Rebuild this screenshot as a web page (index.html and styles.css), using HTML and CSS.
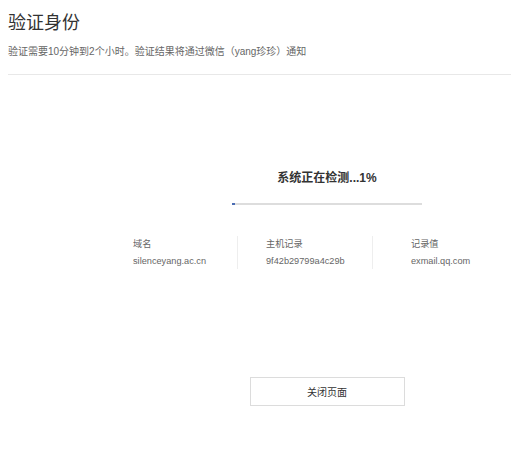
FILE: index.html
```html
<!DOCTYPE html>
<html>
<head>
<meta charset="utf-8">
<link rel="stylesheet" href="styles.css">
</head>
<body>
<div class="page">
  <div class="header">
    <h1 class="title">验证身份</h1>
    <p class="subtitle">验证需要10分钟到2个小时。验证结果将通过微信（yang珍珍）通知</p>
  </div>
  <div class="main">
    <div class="progress-area">
      <div class="status">系统正在检测...1%</div>
      <div class="bar"><div class="fill" style="width:1.5%"></div></div>
    </div>
    <div class="records">
      <div class="cell c1">
        <div class="label">域名</div>
        <div class="value">silenceyang.ac.cn</div>
      </div>
      <div class="cell c2">
        <div class="label">主机记录</div>
        <div class="value">9f42b29799a4c29b</div>
      </div>
      <div class="cell c3">
        <div class="label">记录值</div>
        <div class="value">exmail.qq.com</div>
      </div>
    </div>
    <div class="actions">
      <button class="btn">关闭页面</button>
    </div>
  </div>
</div>
</body>
</html>
```
FILE: styles.css
```css
html, body {
  margin: 0;
  padding: 0;
  background: #fff;
}
body {
  font-family: "Liberation Sans", "Noto Sans CJK SC", sans-serif;
  color: #333;
}
.page {
  width: 511px;
}
.header {
  margin-left: 8px;
  padding-top: 11px;
  padding-bottom: 15px;
  border-bottom: 1px solid #e8e8e8;
}
.title {
  margin: 0;
  font-size: 18px;
  line-height: 24px;
  font-weight: normal;
  color: #333;
}
.subtitle {
  margin: 10px 0 0 0;
  font-size: 10px;
  line-height: 14px;
  color: #666;
}
.main {
  padding-top: 94px;
}
.progress-area {
  display: flex;
  flex-direction: column;
  align-items: center;
  margin-left: 143px;
  width: 368px;
}
.status {
  font-size: 12px;
  line-height: 18px;
  font-weight: bold;
  color: #333;
}
.bar {
  margin-top: 16px;
  width: 190px;
  height: 2px;
  background: #ddd;
}
.fill {
  height: 100%;
  background: #4a6cb3;
}
.records {
  display: flex;
  margin-top: 31px;
  margin-left: 133px;
}
.cell {
  display: flex;
  flex-direction: column;
  gap: 3px;
  padding: 1px 0;
}
.c1 {
  width: 104px;
  border-right: 1px solid #eee;
}
.c2 {
  width: 106px;
  padding-left: 28px;
  border-right: 1px solid #eee;
}
.c3 {
  padding-left: 38px;
}
.label, .value {
  font-size: 9.2px;
  line-height: 14px;
  color: #666;
}
.actions {
  display: flex;
  justify-content: center;
  margin-left: 143px;
  width: 368px;
  margin-top: 108px;
}
.btn {
  width: 155px;
  height: 29px;
  background: #fff;
  border: 1px solid #dcdcdc;
  font-family: "Liberation Sans", "Noto Sans CJK SC", sans-serif;
  font-size: 10px;
  color: #333;
  padding: 0;
}
```
